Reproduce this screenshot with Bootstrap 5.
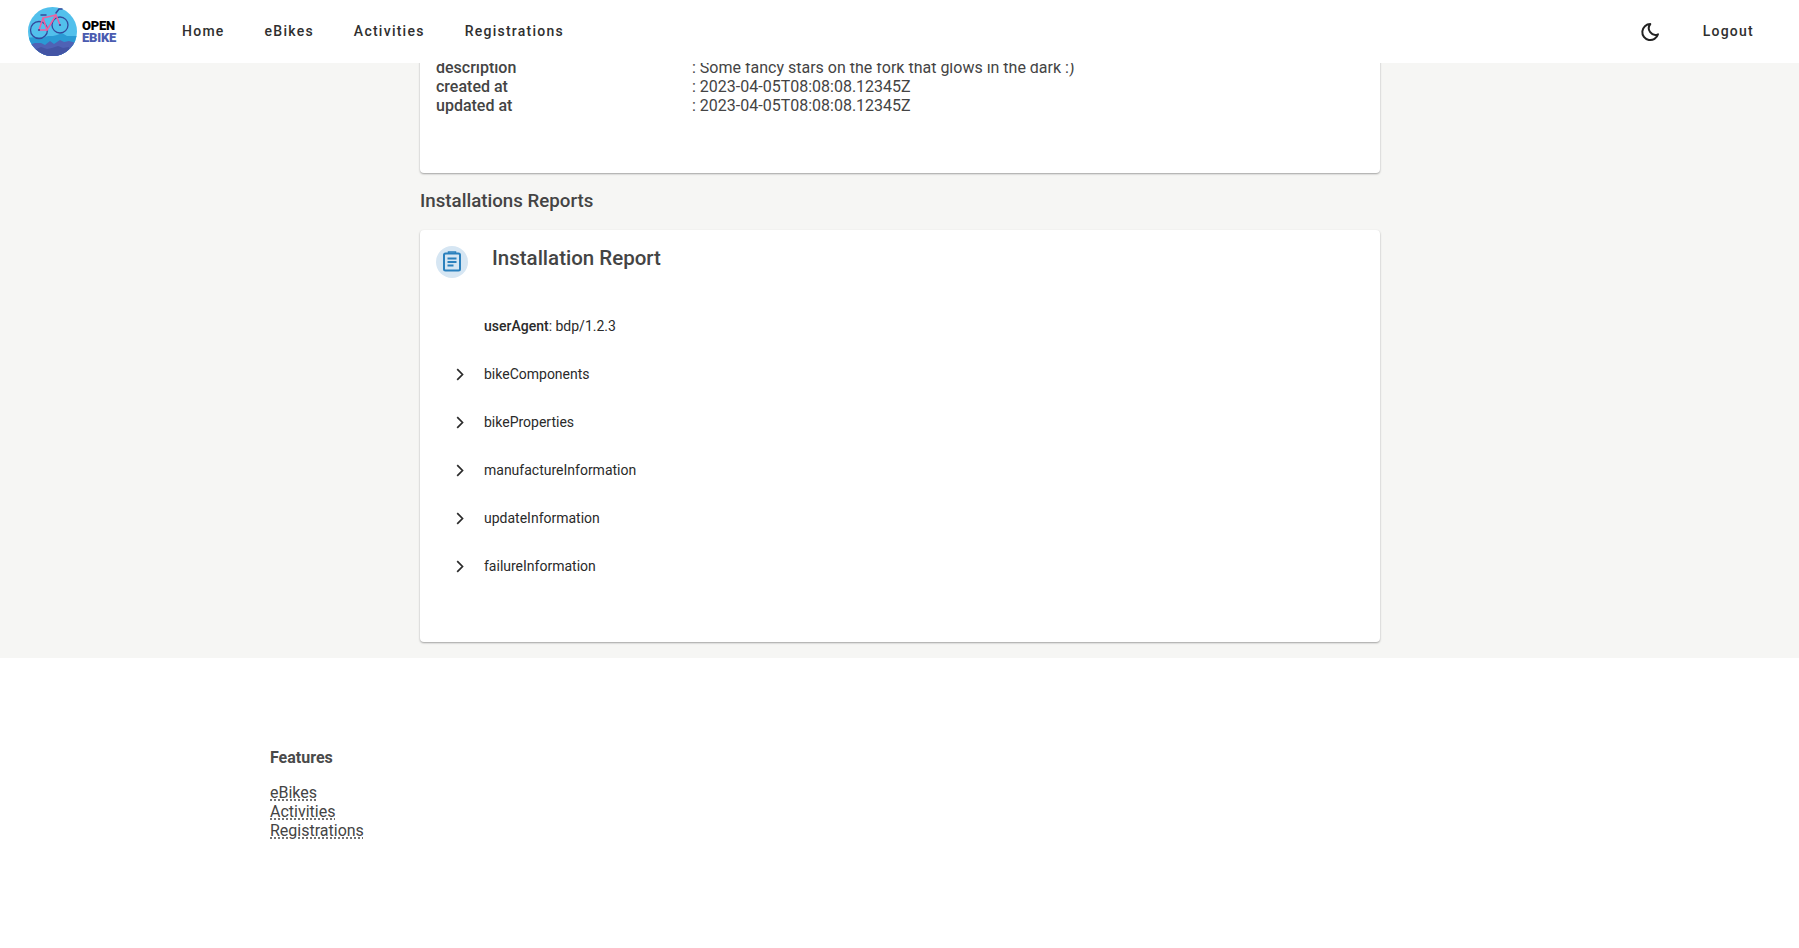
<!DOCTYPE html>
<html lang="en">
<head>
<meta charset="utf-8">
<title>Open eBike</title>
<link href="https://cdn.jsdelivr.net/npm/bootstrap@5.3.0/dist/css/bootstrap.min.css" rel="stylesheet">
<style>
html,body{height:948px;overflow:hidden}
body{font-family:Roboto,"Liberation Sans",sans-serif;color:#444;background:#fff;font-size:16px}
.top-bar{height:63px;background:#fff;padding:0 25px 0 26px;position:relative;z-index:10;flex-wrap:nowrap}
.brand-box{width:136px;height:63px;color:#000}
.brand-words{font-size:13px;font-weight:900;line-height:12px;margin-left:2px;letter-spacing:-.2px;padding-top:1px}
.brand-words span{display:block}
.brand-blue{color:#4a5bb0}
.top-link{font-size:14px;font-weight:500;letter-spacing:1.25px;color:#2f2f2f;padding:0 20px;line-height:63px;text-decoration:none}
.moon{width:24px;height:24px;margin-right:21px}
.grey-zone{background:#f6f6f4;height:600px}
.center-col{width:960px;margin-left:420px}
.sheet{background:#fff;border-radius:4px;box-shadow:0 1px 2px rgba(0,0,0,.35)}
.sheet-a{margin-top:-5px;height:115px;padding:0 16px;line-height:19px}
.label-cell{width:256px;font-weight:500}
.sec-title{font-size:18.72px;font-weight:500;line-height:22px;margin:17px 0 18px;color:#444}
.sheet-b{height:412px;padding:16px}
.icon-disc{width:32px;height:32px;border-radius:50%;background:#d6e6f3;flex:none}
.sheet-title{font-size:20.5px;font-weight:500;line-height:24px;margin:0 0 0 24px;color:#444}
.tree{margin-top:24px}
.tree-row{height:48px;font-size:14px;color:#2a2a2a}
.chev{width:48px;flex:none;padding-left:20px}
.foot-zone{margin-left:270px;padding-top:90px}
.foot-head{font-weight:700;font-size:16px;line-height:20px;margin-bottom:15px;color:#4a4a4a}
.foot-link{display:table;line-height:19px;color:#444;text-decoration:underline dotted;text-underline-offset:2px}
</style>
</head>
<body>
<nav class="navbar top-bar d-flex align-items-center justify-content-start">
  <a class="brand-box d-flex align-items-center text-decoration-none" href="#">
    <svg width="54" height="54" viewBox="26 5 54 54" aria-hidden="true">
      <defs><clipPath id="disc"><circle cx="52.500" cy="31.500" r="24.500"/></clipPath></defs>
      <g clip-path="url(#disc)">
        <rect x="26" y="5" width="54" height="54" fill="#52c0ec"/>
        <path d="M26 38l10-1 6 1 6-2 5 0 4-1 5-2 5 3 13 0v25H26z" fill="#2a9ad4"/>
        <path d="M26 46l9-3 6 0 4 2 5-4 4 3 6-4 4 2 5-1 11 3v20H26z" fill="#4f62b5"/>
        <path d="M34 50l7-3 6 2 5-1 6-2 5 2 6-1v10H34z" fill="#4354a4"/>
      </g>
      <g fill="none" stroke="#34499c" stroke-width="1.300">
        <circle cx="39" cy="30" r="8.500"/>
        <circle cx="60" cy="25" r="8"/>
      </g>
      <g fill="none" stroke="#ee5f9f" stroke-width="1.500" stroke-linecap="round" stroke-linejoin="round">
        <path d="M39 30l4-12 13-3 4 10"/>
        <path d="M39 30l8 0 9-15"/>
        <path d="M43 18l4 12"/>
      </g>
      <path d="M41 15h5M56 13l3-4h3" fill="none" stroke="#34499c" stroke-width="1.500" stroke-linecap="round"/>
      <circle cx="39" cy="30" r="1.100" fill="#34499c"/>
      <circle cx="60" cy="25" r="1.100" fill="#34499c"/>
    </svg>
    <div class="brand-words"><span>OPEN</span><span class="brand-blue">EBIKE</span></div>
  </a>
  <a class="top-link" href="#">Home</a>
  <a class="top-link" href="#">eBikes</a>
  <a class="top-link" href="#">Activities</a>
  <a class="top-link" href="#">Registrations</a>
  <div class="ms-auto d-flex align-items-center">
    <svg class="moon" viewBox="0 0 24 24" aria-hidden="true"><path d="M12.300 4.100a8 8 0 1 0 7.700 10.200 6.600 6.600 0 0 1-7.700-10.200z" fill="none" stroke="#222" stroke-width="2" stroke-linejoin="round"/></svg>
    <a class="top-link" href="#">Logout</a>
  </div>
</nav>
<main class="grey-zone">
  <div class="center-col">
    <section class="sheet sheet-a">
      <div class="d-flex"><div class="label-cell">description</div><div>: Some fancy stars on the fork that glows in the dark :)</div></div>
      <div class="d-flex"><div class="label-cell">created at</div><div>: 2023-04-05T08:08:08.12345Z</div></div>
      <div class="d-flex"><div class="label-cell">updated at</div><div>: 2023-04-05T08:08:08.12345Z</div></div>
    </section>
    <h2 class="sec-title">Installations Reports</h2>
    <section class="sheet sheet-b">
      <div class="d-flex align-items-start">
        <div class="icon-disc d-flex align-items-center justify-content-center">
          <svg width="20" height="22" viewBox="0 0 20 22" aria-hidden="true"><g fill="none" stroke="#2a80bd" stroke-width="2"><rect x="2" y="2.500" width="16" height="17" rx="1.500"/><path d="M6.500 2.500v-1.500h7v1.500" stroke-width="1.500"/><path d="M5.500 7.500h9M5.500 11h9M5.500 14.500h6"/></g></svg>
        </div>
        <h3 class="sheet-title">Installation Report</h3>
      </div>
      <div class="tree">
        <div class="tree-row d-flex align-items-center"><span class="chev"></span><span><strong class="fw-medium">userAgent</strong>: bdp/1.2.3</span></div>
        <div class="tree-row d-flex align-items-center"><span class="chev"><svg width="8" height="13" viewBox="0 0 8 13" aria-hidden="true"><path d="M1.200 1.200l5.300 5.300-5.300 5.300" fill="none" stroke="#2a2a2a" stroke-width="1.700"/></svg></span><span>bikeComponents</span></div>
        <div class="tree-row d-flex align-items-center"><span class="chev"><svg width="8" height="13" viewBox="0 0 8 13" aria-hidden="true"><path d="M1.200 1.200l5.300 5.300-5.300 5.300" fill="none" stroke="#2a2a2a" stroke-width="1.700"/></svg></span><span>bikeProperties</span></div>
        <div class="tree-row d-flex align-items-center"><span class="chev"><svg width="8" height="13" viewBox="0 0 8 13" aria-hidden="true"><path d="M1.200 1.200l5.300 5.300-5.300 5.300" fill="none" stroke="#2a2a2a" stroke-width="1.700"/></svg></span><span>manufactureInformation</span></div>
        <div class="tree-row d-flex align-items-center"><span class="chev"><svg width="8" height="13" viewBox="0 0 8 13" aria-hidden="true"><path d="M1.200 1.200l5.300 5.300-5.300 5.300" fill="none" stroke="#2a2a2a" stroke-width="1.700"/></svg></span><span>updateInformation</span></div>
        <div class="tree-row d-flex align-items-center"><span class="chev"><svg width="8" height="13" viewBox="0 0 8 13" aria-hidden="true"><path d="M1.200 1.200l5.300 5.300-5.300 5.300" fill="none" stroke="#2a2a2a" stroke-width="1.700"/></svg></span><span>failureInformation</span></div>
      </div>
    </section>
  </div>
</main>
<footer class="foot-zone">
  <div class="foot-head">Features</div>
  <a class="foot-link" href="#">eBikes</a>
  <a class="foot-link" href="#">Activities</a>
  <a class="foot-link" href="#">Registrations</a>
</footer>
<script src="https://cdn.jsdelivr.net/npm/bootstrap@5.3.0/dist/js/bootstrap.bundle.min.js"></script>
</body>
</html>
